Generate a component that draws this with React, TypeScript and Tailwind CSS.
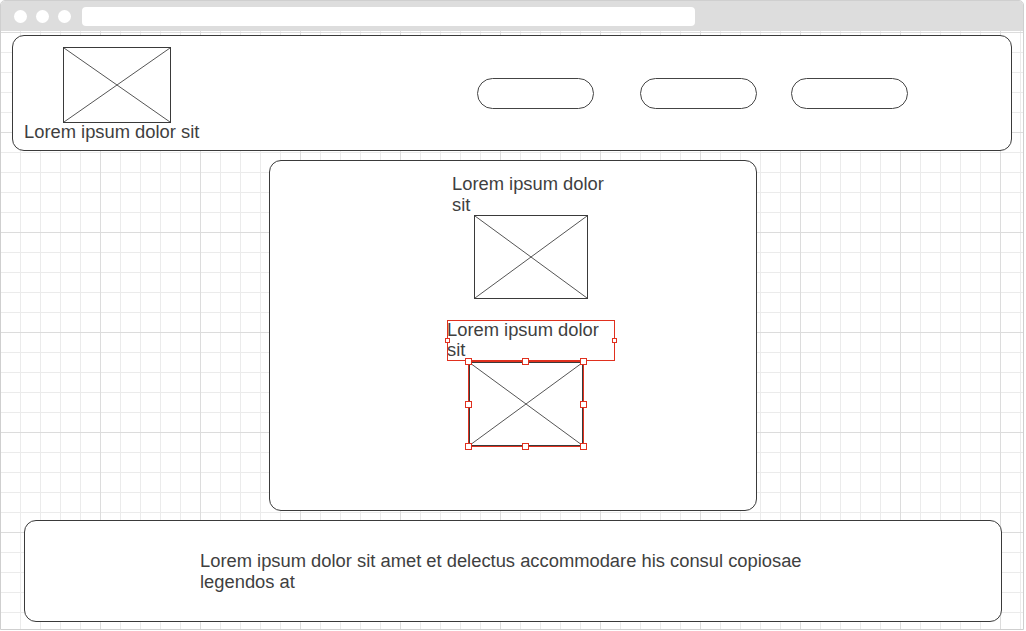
import React from "react";

function Placeholder({ className }: { className: string }) {
  return (
    <div className={`relative border border-[#3a3a3a] bg-white ${className}`}>
      <svg className="absolute inset-0 h-full w-full" preserveAspectRatio="none" viewBox="0 0 100 100">
        <line x1="0" y1="0" x2="100" y2="100" stroke="#555" strokeWidth="1" vectorEffect="non-scaling-stroke" />
        <line x1="100" y1="0" x2="0" y2="100" stroke="#555" strokeWidth="1" vectorEffect="non-scaling-stroke" />
      </svg>
    </div>
  );
}

function Handle({ className }: { className: string }) {
  return <div className={`absolute h-[7px] w-[7px] border border-[#e0301e] bg-white ${className}`} />;
}

function Pill({ className }: { className: string }) {
  return <div className={`h-[31px] w-[117px] shrink-0 rounded-full border border-[#444] bg-white ${className}`} />;
}

export default function App() {
  return (
    <div className="h-[631px] w-[1026px] bg-white font-['Liberation_Sans',Arial,sans-serif] text-[18.35px] text-[#3f3f3f]">
      <div className="flex h-[630px] w-[1024px] flex-col overflow-hidden rounded-t-[5px] border border-[#cfcfcf]">
        {/* browser chrome */}
        <div className="flex h-[30px] shrink-0 items-center bg-[#dddddd] pl-[13px]">
          <div className="h-[13px] w-[13px] rounded-full bg-white" />
          <div className="ml-[9px] h-[13px] w-[13px] rounded-full bg-white" />
          <div className="ml-[9px] h-[13px] w-[13px] rounded-full bg-white" />
          <div className="ml-[11px] h-[19px] w-[613px] rounded-[4px] bg-white" />
        </div>

        {/* canvas */}
        <div className="flex flex-1 flex-col items-start bg-white bg-[image:linear-gradient(to_right,#dcdcdc_1px,transparent_1px),linear-gradient(to_bottom,#dcdcdc_1px,transparent_1px),linear-gradient(to_right,#ebebeb_1px,transparent_1px),linear-gradient(to_bottom,#ebebeb_1px,transparent_1px)] bg-[size:100px_100px,100px_100px,20px_20px,20px_20px] bg-[position:-1px_1px]">
          {/* header */}
          <div className="ml-[11px] mt-[4px] flex h-[116px] w-[1000px] shrink-0 items-start rounded-[12px] border border-[#3a3a3a] bg-white">
            <div className="flex w-[200px] shrink-0 flex-col items-start">
              <Placeholder className="ml-[50px] mt-[11px] h-[76px] w-[108px]" />
              <div className="-mt-px ml-[11px] whitespace-nowrap leading-[20px]">Lorem ipsum dolor sit</div>
            </div>
            <Pill className="ml-[264px] mt-[42px]" />
            <Pill className="ml-[46px] mt-[42px]" />
            <Pill className="ml-[34px] mt-[42px]" />
          </div>

          {/* main panel */}
          <div className="ml-[268px] mt-[9px] flex h-[351px] w-[488px] shrink-0 flex-col items-start rounded-[12px] border border-[#3a3a3a] bg-white">
            <div className="ml-[182px] mt-[12px] w-[160px] leading-[21px]">Lorem ipsum dolor sit</div>
            <Placeholder className="ml-[204px] h-[84px] w-[114px]" />

            <div className="relative ml-[177px] mt-[21px] h-[41px] w-[168px] leading-[20px] shadow-[inset_0_0_0_1px_#e0301e]">
              Lorem ipsum dolor sit
              <div className="absolute left-[-2px] top-[18px] h-[5px] w-[5px] border border-[#e0301e] bg-white" />
              <div className="absolute right-[-2px] top-[18px] h-[5px] w-[5px] border border-[#e0301e] bg-white" />
            </div>

            <div className="relative ml-[198px] h-[86px] w-[116px] border border-[#e0301e]">
              <Placeholder className="h-full w-full" />
              <Handle className="left-[-4px] top-[-4px]" />
              <Handle className="left-[53px] top-[-4px]" />
              <Handle className="right-[-4px] top-[-4px]" />
              <Handle className="left-[-4px] top-[39px]" />
              <Handle className="right-[-4px] top-[39px]" />
              <Handle className="bottom-[-4px] left-[-4px]" />
              <Handle className="bottom-[-4px] left-[53px]" />
              <Handle className="bottom-[-4px] right-[-4px]" />
            </div>
          </div>

          {/* footer */}
          <div className="ml-[23px] mt-[9px] h-[102px] w-[978px] shrink-0 rounded-[12px] border border-[#3a3a3a] bg-white">
            <div className="ml-[175px] mt-[29px] w-[620px] leading-[21px]">
              Lorem ipsum dolor sit amet et delectus accommodare his consul copiosae legendos at
            </div>
          </div>
        </div>
      </div>
    </div>
  );
}
